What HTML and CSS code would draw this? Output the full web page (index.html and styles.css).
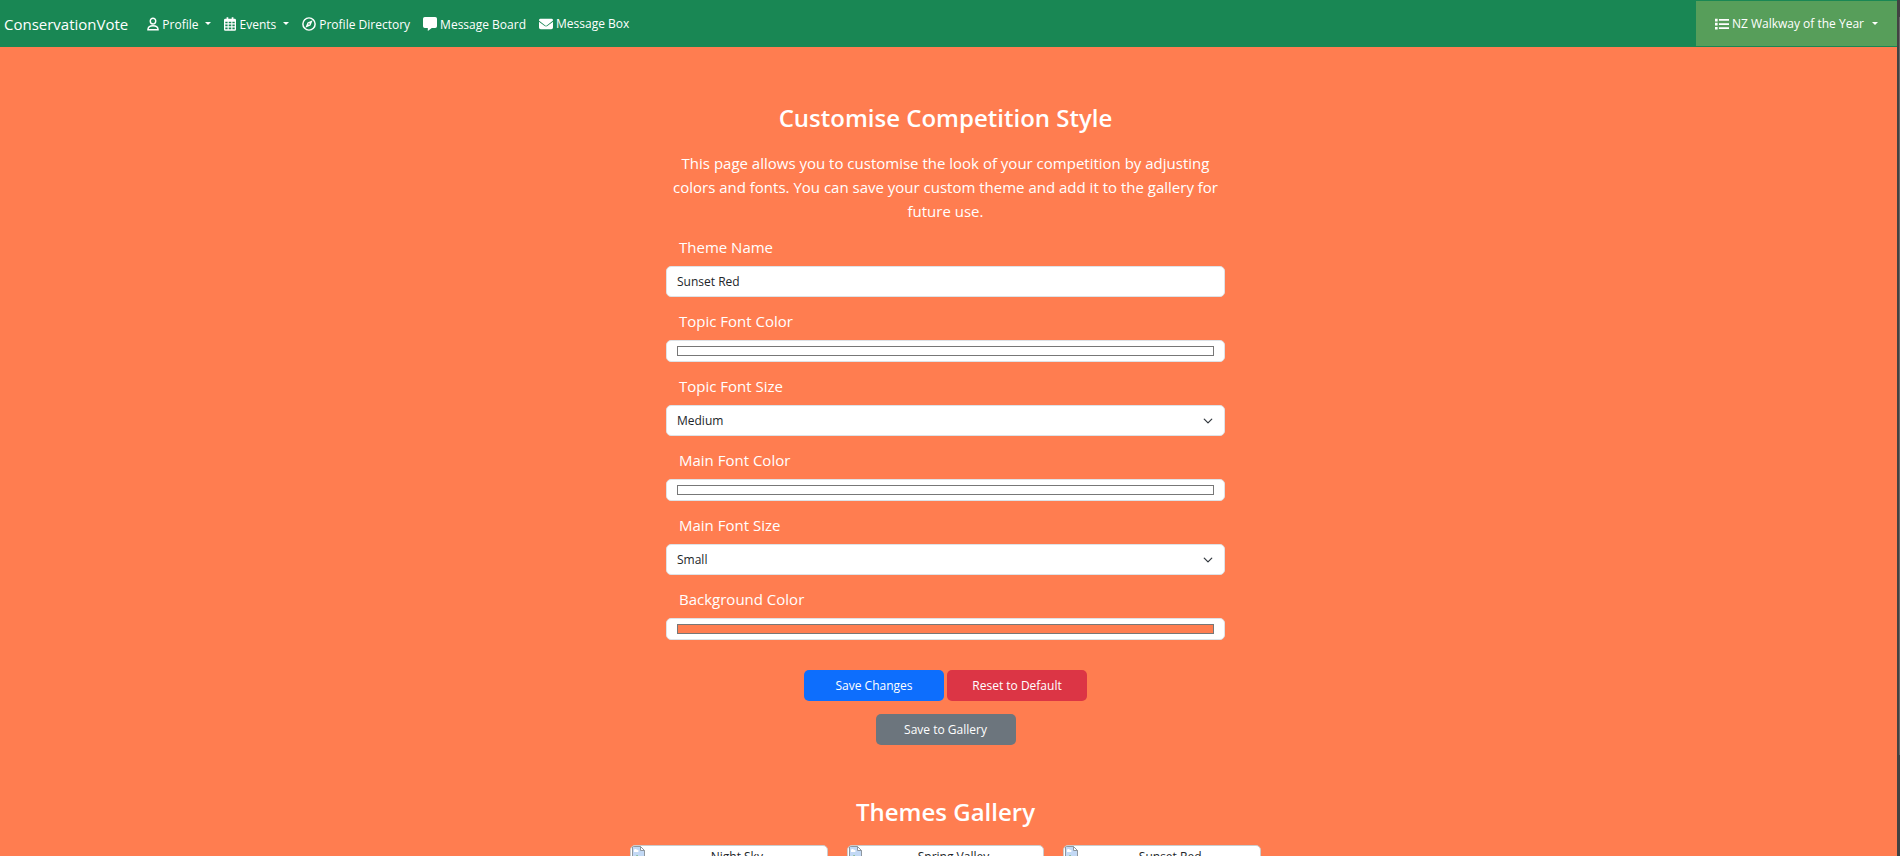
FILE: index.html
```html
<!DOCTYPE html>
<html lang="en">
<head>
<meta charset="utf-8">
<title>ConservationVote - Customise Competition Style</title>
<link rel="stylesheet" href="styles.css">
</head>
<body>
<div class="page">
  <nav class="navbar">
    <a class="brand" href="#">ConservationVote</a>
    <ul class="nav-list">
      <li><a class="nav-link" href="#">
        <svg class="icon narrow" viewBox="0 0 14 16"><path fill="none" stroke="currentColor" stroke-width="1.7" d="M7 1.200a3.200 3.400 0 1 1 0 6.800a3.200 3.400 0 1 1 0-6.800zM1.100 14.800c0-3.600 2-4.700 5.900-4.700s5.900 1.100 5.900 4.700z"/></svg>
        <span>Profile</span><i class="caret"></i></a></li>
      <li><a class="nav-link" href="#">
        <svg class="icon narrow" viewBox="0 0 14 16"><path fill="currentColor" fill-rule="evenodd" d="M3 0h2v2h4V0h2v2h1.500A1.500 1.500 0 0 1 14 3.500v11a1.500 1.500 0 0 1-1.500 1.500h-11A1.500 1.500 0 0 1 0 14.500v-11A1.500 1.500 0 0 1 1.500 2H3zM1.500 5.500v1.700h2.700V5.500zM5.500 5.500v1.700h3V5.500zM9.800 5.500v1.700h2.700V5.500zM1.500 8.700v2h2.700v-2zM5.500 8.700v2h3v-2zM9.800 8.700v2h2.700v-2zM1.500 12.200v2h2.700v-2zM5.500 12.200v2h3v-2zM9.800 12.200v2h2.700v-2z"/></svg>
        <span>Events</span><i class="caret"></i></a></li>
      <li><a class="nav-link" href="#">
        <svg class="icon" viewBox="0 0 16 16"><circle cx="8" cy="8" r="7" fill="none" stroke="currentColor" stroke-width="1.700"/><path fill="currentColor" fill-rule="evenodd" d="M12.200 3.800 9.700 9.700 3.800 12.200 6.300 6.300zM8 7.100a.9.9 0 1 0 0 1.800a.9.9 0 1 0 0-1.800z"/></svg>
        <span>Profile Directory</span></a></li>
      <li><a class="nav-link" href="#">
        <svg class="icon" viewBox="0 0 16 16"><path fill="currentColor" d="M2 0h12a2 2 0 0 1 2 2v8.500a2 2 0 0 1-2 2h-4L5.500 16v-3.500H2a2 2 0 0 1-2-2V2a2 2 0 0 1 2-2z"/></svg>
        <span>Message Board</span></a></li>
      <li><a class="nav-link level" href="#">
        <svg class="icon" viewBox="0 0 16 16"><path fill="currentColor" d="M1.500 2h13A1.500 1.500 0 0 1 15.400 4.700L8.900 9.600a1.500 1.500 0 0 1-1.800 0L.6 4.700A1.500 1.500 0 0 1 1.500 2zM0 5.500l6.500 4.900a2.500 2.500 0 0 0 3 0L16 5.500V12a2 2 0 0 1-2 2H2a2 2 0 0 1-2-2z"/></svg>
        <span>Message Box</span></a></li>
    </ul>
    <button class="competition" type="button">
      <svg class="icon" viewBox="0 0 16 16"><path fill="currentColor" d="M0 2h3v3H0zM0 6.700h3v3H0zM0 11.400h3v3H0zM4.500 2.400H16v2H4.500zM4.500 7.100H16v2H4.500zM4.500 11.800H16v2H4.500z"/></svg>
      <span>NZ Walkway of the Year</span><i class="caret"></i>
    </button>
  </nav>

  <main class="main">
    <form class="theme-form">
      <h1 class="title">Customise Competition Style</h1>
      <p class="intro">This page allows you to customise the look of your competition by adjusting colors and fonts. You can save your custom theme and add it to the gallery for future use.</p>
      <div class="fields">
        <div class="field">
          <label for="theme-name">Theme Name</label>
          <input class="control" id="theme-name" type="text" value="Sunset Red">
        </div>
        <div class="field">
          <label for="topic-color">Topic Font Color</label>
          <input class="control color" id="topic-color" type="color" value="#ffffff">
        </div>
        <div class="field">
          <label for="topic-size">Topic Font Size</label>
          <select class="control select" id="topic-size"><option>Small</option><option selected>Medium</option><option>Large</option></select>
        </div>
        <div class="field">
          <label for="main-color">Main Font Color</label>
          <input class="control color" id="main-color" type="color" value="#ffffff">
        </div>
        <div class="field">
          <label for="main-size">Main Font Size</label>
          <select class="control select" id="main-size"><option selected>Small</option><option>Medium</option><option>Large</option></select>
        </div>
        <div class="field">
          <label for="background-color">Background Color</label>
          <input class="control color" id="background-color" type="color" value="#ff7d50">
        </div>
      </div>
      <div class="actions">
        <button class="btn save" type="submit">Save Changes</button>
        <button class="btn reset" type="reset">Reset to Default</button>
      </div>
      <div class="actions">
        <button class="btn gallery-save" type="button">Save to Gallery</button>
      </div>
    </form>

    <section class="gallery">
      <h2 class="title">Themes Gallery</h2>
      <div class="cards">
        <article class="card"><svg class="thumb" viewBox="0 0 16 16"><path fill="#c3d9f5" stroke="#8e979f" d="M1.500.500h8l4 4v10h-12z"/><path fill="#fff" stroke="#8e979f" d="M9.500.500v4h4z"/><path fill="#fff" d="M3 5a1.500 1.500 0 0 1 3-1a1 1 0 0 1 1 2H3z"/><path fill="#59a846" d="M2 14l4-5 5 5z"/></svg><span class="card-name">Night Sky</span></article>
        <article class="card"><svg class="thumb" viewBox="0 0 16 16"><path fill="#c3d9f5" stroke="#8e979f" d="M1.500.500h8l4 4v10h-12z"/><path fill="#fff" stroke="#8e979f" d="M9.500.500v4h4z"/><path fill="#fff" d="M3 5a1.500 1.500 0 0 1 3-1a1 1 0 0 1 1 2H3z"/><path fill="#59a846" d="M2 14l4-5 5 5z"/></svg><span class="card-name">Spring Valley</span></article>
        <article class="card"><svg class="thumb" viewBox="0 0 16 16"><path fill="#c3d9f5" stroke="#8e979f" d="M1.500.500h8l4 4v10h-12z"/><path fill="#fff" stroke="#8e979f" d="M9.500.500v4h4z"/><path fill="#fff" d="M3 5a1.500 1.500 0 0 1 3-1a1 1 0 0 1 1 2H3z"/><path fill="#59a846" d="M2 14l4-5 5 5z"/></svg><span class="card-name">Sunset Red</span></article>
      </div>
    </section>
  </main>
</div>
<div class="scroll-track"><div class="scroll-thumb"></div></div>
</body>
</html>
```
FILE: styles.css
```css
* { box-sizing: border-box; }

body {
  margin: 0;
  height: 100vh;
  overflow: hidden;
  display: grid;
  grid-template-columns: 1fr 3px;
  background: #ff7d50;
  color: #fff;
  font-family: "Segoe UI", "Open Sans", "Noto Sans", sans-serif;
  font-size: 15px;
  line-height: 24px;
}

button, input, select { font-family: inherit; font-size: 12px; }

.page { min-width: 0; height: 100vh; overflow: hidden; }

.navbar {
  display: flex;
  align-items: center;
  height: 47px;
  padding: 1px 0 1px 4px;
  background: #198754;
}
.brand { margin-right: 19px; color: #fff; font-size: 15px; text-decoration: none; }
.nav-list { display: flex; gap: 13px; margin: 0; padding: 0; list-style: none; }
.nav-link {
  display: flex;
  align-items: center;
  gap: 3px;
  color: #fff;
  font-size: 12px;
  text-decoration: none;
}
.nav-link span { padding-top: 2px; }
.nav-link.level span { padding-top: 0; }
.nav-link.level { padding-top: 1px; }
.icon { width: 14px; height: 14px; flex: none; }
.icon.narrow { width: 12px; }
.caret {
  margin: 0 0 0 4px;
  border: 3px solid transparent;
  border-top-color: currentColor;
  border-bottom: 0;
}
.competition {
  display: flex;
  align-items: center;
  gap: 3px;
  align-self: stretch;
  margin-left: auto;
  padding: 0 19px;
  border: 0;
  background: #579e5a;
  color: #fff;
}
.competition .caret { margin-left: 5px; }

.main { padding: 56px 6px 0 0; }
.theme-form { width: 100%; max-width: 559px; margin: 0 auto; }
.title { margin: 0; font-size: 24px; font-weight: 600; line-height: 30px; text-align: center; }
.intro { margin: 18px 0 12px; text-align: center; }
.fields { display: grid; gap: 12px; }
.field { display: grid; gap: 7px; }
.field label { padding-left: 13px; }

.control {
  width: 100%;
  height: 31px;
  margin: 0;
  padding: 0 10px;
  border: 1px solid #dee2e6;
  border-radius: 5px;
  background-color: #fff;
  color: #212529;
}
.color { height: 22px; padding: 5px 10px; }
.color::-webkit-color-swatch-wrapper { padding: 0; }
.color::-webkit-color-swatch { border: 1px solid #777; border-radius: 0; }
.select {
  appearance: none;
  background-image: url("data:image/svg+xml,%3Csvg xmlns='http://www.w3.org/2000/svg' viewBox='0 0 16 16'%3E%3Cpath fill='none' stroke='%23343a40' stroke-linecap='round' stroke-linejoin='round' stroke-width='2' d='m2 5 6 6 6-6'/%3E%3C/svg%3E");
  background-repeat: no-repeat;
  background-position: right 11px center;
  background-size: 10px 10px;
}

.actions { display: flex; justify-content: center; gap: 3px; }
.fields + .actions { margin: 30px 0 13px; }
.btn { width: 140px; height: 31px; padding: 0; border: 0; border-radius: 5px; color: #fff; }
.save { background: #0d6efd; }
.reset { background: #dc3545; }
.gallery-save { background: #6c757d; }

.gallery { width: 100%; max-width: 631px; margin: 52px auto 0; }
.cards { display: grid; grid-template-columns: repeat(3, 1fr); gap: 19px; margin-top: 18px; }
.card {
  display: flex;
  height: 180px;
  border: 1px solid #ccc;
  border-radius: 5px;
  background: #fff;
  color: #212529;
  font-size: 12px;
  overflow: hidden;
}
.thumb { width: 16px; height: 16px; flex: none; }
.card-name { flex: 1; text-align: center; line-height: 22px; }

.scroll-track { height: 100vh; padding: 17px 0 0 2px; background: #424242; }
.scroll-thumb { height: 88%; background: #686868; }
```
